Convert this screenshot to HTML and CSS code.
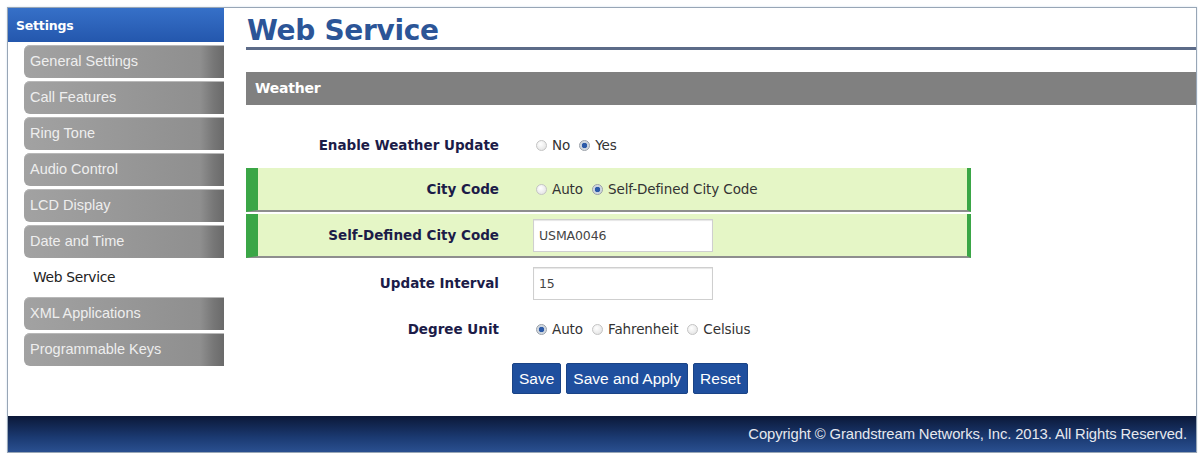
FILE: index.html
```html
<!DOCTYPE html>
<html>
<head>
<meta charset="utf-8">
<link rel="stylesheet" href="styles.css">
</head>
<body>
<div class="frame">
  <div class="body">
    <nav class="sidebar">
      <div class="side-head">Settings</div>
      <div class="side-item">General Settings</div>
      <div class="side-item">Call Features</div>
      <div class="side-item">Ring Tone</div>
      <div class="side-item">Audio Control</div>
      <div class="side-item">LCD Display</div>
      <div class="side-item">Date and Time</div>
      <div class="side-item active">Web Service</div>
      <div class="side-item">XML Applications</div>
      <div class="side-item">Programmable Keys</div>
    </nav>
    <main class="main">
      <h1 class="title">Web Service</h1>
      <div class="section-bar">Weather</div>
      <div class="form">
        <div class="row">
          <div class="label">Enable Weather Update</div>
          <div class="value">
            <label class="opt"><span class="radio"></span>No</label>
            <label class="opt"><span class="radio on"></span>Yes</label>
          </div>
        </div>
        <div class="row hl">
          <div class="label">City Code</div>
          <div class="value">
            <label class="opt"><span class="radio"></span>Auto</label>
            <label class="opt"><span class="radio on"></span>Self-Defined City Code</label>
          </div>
        </div>
        <div class="row hl">
          <div class="label">Self-Defined City Code</div>
          <div class="value"><div class="input">USMA0046</div></div>
        </div>
        <div class="row">
          <div class="label">Update Interval</div>
          <div class="value"><div class="input">15</div></div>
        </div>
        <div class="row">
          <div class="label">Degree Unit</div>
          <div class="value">
            <label class="opt"><span class="radio on"></span>Auto</label>
            <label class="opt"><span class="radio"></span>Fahrenheit</label>
            <label class="opt"><span class="radio"></span>Celsius</label>
          </div>
        </div>
        <div class="buttons">
          <button class="btn">Save</button>
          <button class="btn">Save and Apply</button>
          <button class="btn">Reset</button>
        </div>
      </div>
    </main>
  </div>
  <footer class="footer">Copyright © Grandstream Networks, Inc. 2013. All Rights Reserved.</footer>
</div>
</body>
</html>
```
FILE: styles.css
```css
html, body {
  margin: 0;
  padding: 0;
  background: #ffffff;
}
body {
  font-family: "Liberation Sans", Arial, sans-serif;
}
.frame {
  margin: 7px 0 0 7px;
  width: 1188px;
  border: 1px solid #98a6b6;
  box-shadow: 0 0 2px #cfe0ee;
}
.body {
  display: flex;
  height: 408px;
}
.sidebar {
  width: 216px;
  flex: none;
  display: flex;
  flex-direction: column;
}
.side-head {
  height: 34px;
  line-height: 36px;
  padding-left: 8px;
  background: linear-gradient(#3670c8, #2457ad);
  color: #ffffff;
  font-family: "DejaVu Sans", Verdana, sans-serif;
  font-weight: bold;
  font-size: 12.5px;
  letter-spacing: -0.2px;
}
.side-item {
  margin: 3px 0 0 16px;
  height: 33px;
  line-height: 32px;
  padding-left: 6px;
  border-radius: 6px 0 0 6px;
  background: linear-gradient(to right, #a2a2a2, #8f8f8f 88%, #767676 95%, #6a6a6a);
  color: #eeeeee;
  font-size: 14.5px;
  letter-spacing: 0;
  box-shadow: inset 0 1px 0 #b8b8b8;
}
.side-item.active {
  background: none;
  box-shadow: none;
  color: #222222;
  padding-left: 9px;
  font-family: "DejaVu Sans", Verdana, sans-serif;
  font-size: 13.8px;
  letter-spacing: -0.3px;
}
.main {
  flex: 1;
  margin-left: 22px;
}
.title {
  margin: 0;
  height: 39px;
  line-height: 46px;
  padding-left: 1px;
  font-family: "DejaVu Sans", Verdana, sans-serif;
  font-weight: bold;
  font-size: 28px;
  letter-spacing: -0.3px;
  color: #2c5597;
  border-bottom: 3px solid #5c6b88;
  overflow: hidden;
}
.section-bar {
  margin-top: 22px;
  height: 33px;
  line-height: 33px;
  padding-left: 9px;
  background: #808080;
  color: #ffffff;
  font-family: "DejaVu Sans", Verdana, sans-serif;
  font-weight: bold;
  font-size: 14px;
  letter-spacing: -0.2px;
}
.form {
  margin-top: 17px;
  width: 725px;
}
.row {
  display: flex;
  align-items: center;
  height: 46px;
}
.row.hl {
  height: 42px;
  margin-bottom: 2px;
  background: #e5f6c6;
  border-left: 12px solid #3aa646;
  border-right: 4px solid #3aa646;
  border-bottom: 2px solid #8e8e8e;
}
.label {
  width: 253px;
  flex: none;
  box-sizing: border-box;
  padding-right: 12px;
  text-align: right;
  font-family: "DejaVu Sans", Verdana, sans-serif;
  font-weight: bold;
  font-size: 13.5px;
  letter-spacing: 0;
  color: #1c1c48;
}
.row:not(.hl) .label {
  width: 265px;
}
.value {
  padding-left: 22px;
  display: flex;
  align-items: center;
  font-family: "DejaVu Sans", Verdana, sans-serif;
  font-size: 13.5px;
  letter-spacing: -0.1px;
  color: #333333;
}
.opt {
  display: flex;
  align-items: center;
  margin-right: 6px;
}
.radio {
  width: 11px;
  height: 11px;
  box-sizing: border-box;
  border-radius: 50%;
  margin: 0 5px 0 3px;
  border: 1px solid #c4c4c4;
  background: radial-gradient(circle at 40% 35%, #ffffff, #dedede);
}
.radio.on {
  border-color: #9aa0a8;
  background: radial-gradient(circle, #2c5aa8 0 2.5px, #c9d2dc 3px, #e8ecf0);
}
.input {
  width: 180px;
  height: 33px;
  box-sizing: border-box;
  border: 1px solid #cfcfcf;
  box-shadow: inset 0 1px 1px #e6e6e6;
  background: #ffffff;
  padding-left: 5px;
  line-height: 31px;
  font-size: 12.5px;
  color: #444444;
}
.buttons {
  display: flex;
  gap: 5px;
  margin-top: 11px;
  padding-left: 266px;
}
.btn {
  height: 31px;
  padding: 0 6px;
  border: 1px solid #1a4386;
  border-radius: 2px;
  background: #1f4f9e;
  color: #ffffff;
  font-family: "Liberation Sans", Arial, sans-serif;
  font-size: 15.5px;
  letter-spacing: 0;
}
.footer {
  height: 36px;
  line-height: 37px;
  background: linear-gradient(#0b1838, #1b3a72 60%, #2a5090);
  color: #e6e8ee;
  text-align: right;
  padding-right: 9px;
  font-size: 14.8px;
  letter-spacing: -0.1px;
}
```
